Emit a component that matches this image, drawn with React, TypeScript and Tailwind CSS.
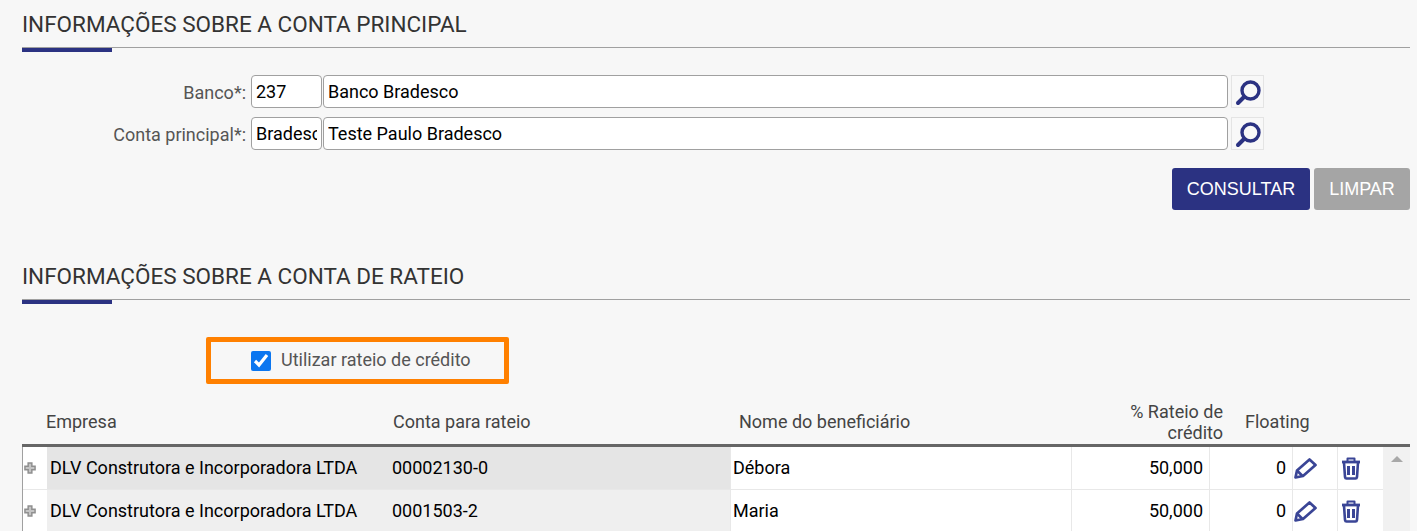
import React from "react";

const navy = "#2b3282";

function SearchIcon() {
  return (
    <svg width="28" height="28" viewBox="0 0 28 28" fill="none">
      <circle cx="16.5" cy="12.5" r="8.5" stroke={navy} strokeWidth="3.4" />
      <path d="M10 19 L4 25" stroke={navy} strokeWidth="4" strokeLinecap="round" />
    </svg>
  );
}

function PencilIcon() {
  return (
    <svg width="23" height="21" viewBox="0 0 23 21" fill="none" stroke="#3a4596" strokeWidth="2.7" strokeLinejoin="round">
      <path d="M1.5 19.5 L3 12.5 L15.5 1.5 L21.5 7 L9 18 Z" />
      <path d="M3.5 13 L8.5 18" />
    </svg>
  );
}

function TrashIcon() {
  return (
    <svg width="20" height="23" viewBox="0 0 20 23" fill="none" stroke="#3a4596" strokeWidth="2.6" strokeLinejoin="round">
      <path d="M1 5 H19" strokeWidth="2.8" />
      <path d="M6.5 4.5 V1.5 H13.5 V4.5" strokeWidth="2" />
      <path d="M3 5.5 L4 20 Q4.2 21.5 5.5 21.5 H14.5 Q15.8 21.5 16 20 L17 5.5" />
      <path d="M7.5 9 V18 M12.5 9 V18" strokeWidth="3" />
    </svg>
  );
}

function PlusIcon() {
  return (
    <svg width="12" height="12" viewBox="0 0 13 13" fill="#c4c4c4" stroke="#8f8f8f" strokeWidth="1.6">
      <path d="M4.5 1 H8.5 V4.5 H12 V8.5 H8.5 V12 H4.5 V8.5 H1 V4.5 H4.5 Z" />
    </svg>
  );
}

function Heading({ title }: { title: string }) {
  return (
    <div className="relative h-[48px] border-b border-[#a0a0a0]">
      <h2 className="pt-[9px] text-[22.5px] leading-[30px] text-[#333333]">{title}</h2>
      <div className="absolute bottom-[-5px] left-0 h-[4px] w-[90px] bg-[#2b3282]" />
    </div>
  );
}

function LookupRow({ label, code, name }: { label: string; code: string; name: string }) {
  return (
    <div className="flex h-[33px] items-center">
      <label className="w-[229px] pr-[5px] pt-[2px] text-right text-[18px] text-[#555555]">{label}</label>
      <input
        readOnly
        value={code}
        className="h-[33px] w-[71px] rounded-[4px] border border-[#a0a0a0] bg-white px-[4px] text-[18px] text-black outline-none"
      />
      <input
        readOnly
        value={name}
        className="ml-[1px] h-[33px] w-[905px] rounded-[4px] border border-[#a0a0a0] bg-white px-[4px] text-[18px] text-black outline-none"
      />
      <button className="ml-[3px] flex h-[33px] w-[33px] items-center justify-center border border-[#e4e4e4] bg-[#f8f8f8]">
        <SearchIcon />
      </button>
    </div>
  );
}

const rows = [
  { company: "DLV Construtora e Incorporadora LTDA", account: "00002130-0", name: "Débora", bg: "bg-[#e5e5e5]" },
  { company: "DLV Construtora e Incorporadora LTDA", account: "0001503-2", name: "Maria", bg: "bg-[#efefef]" },
];

export default function App() {
  return (
    <div
      className="h-[531px] overflow-hidden bg-[#f7f7f7] pl-[22px] pr-[7px]"
      style={{ fontFamily: "Roboto, sans-serif" }}
    >
      <Heading title="INFORMAÇÕES SOBRE A CONTA PRINCIPAL" />

      <div className="mt-[27px] flex flex-col gap-[9px]">
        <LookupRow label="Banco*:" code="237" name="Banco Bradesco" />
        <LookupRow label="Conta principal*:" code="Bradesco" name="Teste Paulo Bradesco" />
      </div>

      <div className="mt-[18px] flex justify-end gap-[4px]">
        <button className="h-[42px] w-[138px] rounded-[3px] bg-[#2b3282] text-[18px] text-white" style={{ fontFamily: "'Liberation Sans', sans-serif" }}>
          CONSULTAR
        </button>
        <button className="h-[42px] w-[96px] rounded-[3px] bg-[#a5a5a5] text-[18px] text-white" style={{ fontFamily: "'Liberation Sans', sans-serif" }}>
          LIMPAR
        </button>
      </div>

      <div className="mt-[42px]">
        <Heading title="INFORMAÇÕES SOBRE A CONTA DE RATEIO" />
      </div>

      <div className="ml-[184px] mt-[37px] flex h-[47px] w-[303px] items-center rounded-[2px] border-[5px] border-[#ff8000] pl-[40px]">
        <input type="checkbox" readOnly checked className="h-[20px] w-[20px] accent-[#0b76f0]" />
        <span className="ml-[10px] pb-[2px] text-[18px] text-[#555555]">Utilizar rateio de crédito</span>
      </div>

      <div className="mt-[15px] grid h-[45px] grid-cols-[347px_346px_384px_124px_156px_31px] items-center text-[18px] leading-[21px] text-[#444444]">
        <div className="pl-[24px]">Empresa</div>
        <div className="pl-[24px]">Conta para rateio</div>
        <div className="pl-[24px]">Nome do beneficiário</div>
        <div className="text-right">% Rateio de crédito</div>
        <div className="pl-[22px]">Floating</div>
        <div />
      </div>

      <div className="flex border-t-[3px] border-[#666666]">
        <div className="flex-1 border-l border-[#a0a0a0]">
          {rows.map((row) => (
            <div
              key={row.account}
              className="grid h-[43px] grid-cols-[24px_342px_341px_341px_138px_83px_45px_46px] border-b border-[#e8e8e8] bg-white text-[18px] text-black"
            >
              <div className="flex items-center pl-[1px]">
                <PlusIcon />
              </div>
              <div className={`flex items-center pb-[2px] pl-[3px] ${row.bg}`}>{row.company}</div>
              <div className={`flex items-center pb-[2px] pl-[3px] ${row.bg}`}>{row.account}</div>
              <div className="flex items-center border-l border-[#e8e8e8] pb-[2px] pl-[2px]">{row.name}</div>
              <div className="flex items-center justify-end border-l border-[#e8e8e8] pb-[2px] pr-[6px]">50,000</div>
              <div className="flex items-center justify-end border-l border-[#e8e8e8] pb-[2px] pr-[6px]">0</div>
              <div className="flex items-center border-l border-[#e8e8e8] pl-[1px]">
                <PencilIcon />
              </div>
              <div className="flex items-center border-l border-[#e8e8e8] pl-[3px]">
                <TrashIcon />
              </div>
            </div>
          ))}
        </div>
        <div className="relative w-[27px] bg-[#f1f1f1]">
          <div className="absolute left-[8px] top-[9px] h-0 w-0 border-x-[6px] border-b-[6px] border-x-transparent border-b-[#a8a8a8]" />
        </div>
      </div>
    </div>
  );
}
